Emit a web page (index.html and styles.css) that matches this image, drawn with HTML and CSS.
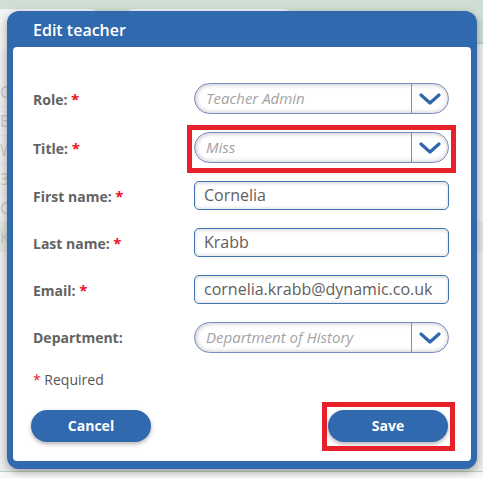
FILE: index.html
```html
<!DOCTYPE html>
<html>
<head>
<meta charset="utf-8">
<link rel="stylesheet" href="styles.css">
</head>
<body>
<div class="backdrop">
  <div class="topband">
    <div class="tab tab1"></div>
    <div class="tab tab2"></div>
  </div>
  <div class="bgpage">
    <div class="bgline"></div>
    <div class="bgrow">Gr</div>
    <div class="bgrow">Er</div>
    <div class="bgrow">W</div>
    <div class="bgrow">3H</div>
    <div class="bgrow">Cl</div>
    <div class="bgrow hl">Kr</div>
  </div>
  <div class="bgfoot"></div>
</div>

<div class="modal">
  <div class="modal-head">Edit teacher</div>
  <div class="modal-body">
    <div class="form">
      <div class="row">
        <div class="label">Role: <span class="req">*</span></div>
        <div class="select"><span class="sel-text">Teacher Admin</span><span class="sel-btn"><svg width="22" height="12" viewBox="0 0 22 12"><path d="M2 2 L11 10 L20 2" fill="none" stroke="#2f67ad" stroke-width="3.2" stroke-linecap="round" stroke-linejoin="round"/></svg></span></div>
      </div>
      <div class="row">
        <div class="label">Title: <span class="req">*</span></div>
        <div class="select"><span class="sel-text">Miss</span><span class="sel-btn"><svg width="22" height="12" viewBox="0 0 22 12"><path d="M2 2 L11 10 L20 2" fill="none" stroke="#2f67ad" stroke-width="3.2" stroke-linecap="round" stroke-linejoin="round"/></svg></span></div>
      </div>
      <div class="row">
        <div class="label">First name: <span class="req">*</span></div>
        <div class="input">Cornelia</div>
      </div>
      <div class="row">
        <div class="label">Last name: <span class="req">*</span></div>
        <div class="input">Krabb</div>
      </div>
      <div class="row">
        <div class="label">Email: <span class="req">*</span></div>
        <div class="input">cornelia.krabb@dynamic.co.uk</div>
      </div>
      <div class="row">
        <div class="label">Department:</div>
        <div class="select"><span class="sel-text">Department of History</span><span class="sel-btn"><svg width="22" height="12" viewBox="0 0 22 12"><path d="M2 2 L11 10 L20 2" fill="none" stroke="#2f67ad" stroke-width="3.2" stroke-linecap="round" stroke-linejoin="round"/></svg></span></div>
      </div>
    </div>
    <div class="required"><span class="req-n">*</span> Required</div>
    <div class="buttons">
      <div class="btn">Cancel</div>
      <div class="btn">Save</div>
    </div>
  </div>
</div>

<div class="mark mark-title"></div>
<div class="mark mark-save"></div>
</body>
</html>
```

FILE: styles.css
```css
html, body {
  margin: 0;
  padding: 0;
}
body {
  width: 483px;
  height: 478px;
  overflow: hidden;
  position: relative;
  background: #f1f3f2;
  font-family: "Open Sans", "Liberation Sans", sans-serif;
}
.backdrop {
  position: absolute;
  left: 0; top: 0; right: 0; bottom: 0;
  display: flex;
  flex-direction: column;
}
.topband {
  height: 42px;
  background: #cfdfd3;
  position: relative;
  flex: none;
}
.tab {
  position: absolute;
  top: 9px;
  height: 40px;
  background: #f2f4f3;
  border-radius: 10px;
}
.tab1 { left: -10px; width: 110px; }
.tab2 { left: 124px; width: 170px; }
.bgpage {
  flex: 1;
  background: #eceeed;
  border-top: 2px solid #bdd0c2;
  color: #c6cac8;
  font-size: 16px;
  padding-top: 12px;
}
.bgline { height: 22px; }
.bgrow {
  height: 28px;
  line-height: 28px;
  border-bottom: 1px solid #e2e5e3;
}
.bgrow.hl { background: #dfe7e1; }
.bgfoot {
  height: 6px;
  background: #f7f8f7;
  border-top: 1px solid #bcd1c1;
}

.modal {
  position: absolute;
  left: 7px;
  top: 11px;
  width: 470px;
  height: 458px;
  background: #3169ae;
  border-radius: 12px;
  box-shadow: 0 3px 8px rgba(0,0,0,0.35);
  display: flex;
  flex-direction: column;
  box-sizing: border-box;
  padding: 0 6px 8px 6px;
}
.modal-head {
  height: 36px;
  color: #fff;
  font-weight: 600;
  font-size: 16px;
  line-height: 38px;
  padding-left: 20px;
  flex: none;
}
.modal-body {
  flex: 1;
  background: #fff;
  border-radius: 4px;
  padding: 36px 22px 0 20px;
  display: flex;
  flex-direction: column;
}
.form {
  display: flex;
  flex-direction: column;
  gap: 18px;
}
.row {
  display: flex;
  align-items: center;
}
.label {
  width: 161px;
  flex: none;
  font-weight: 700;
  font-size: 14px;
  color: #636363;
}
.req {
  color: #e8141e;
  font-size: 15px;
}
.select {
  width: 255px;
  height: 31px;
  box-sizing: border-box;
  border: 1px solid #7a8cc2;
  border-radius: 16px;
  display: flex;
  background: #fff;
  box-shadow: inset 0 2px 4px rgba(0,0,0,0.12), inset 0 -2px 4px rgba(0,0,0,0.10), inset 3px 0 4px rgba(0,0,0,0.06);
  overflow: hidden;
}
.sel-text {
  flex: 1;
  font-style: italic;
  font-size: 15px;
  color: #a3a3a3;
  line-height: 29px;
  padding-left: 11px;
}
.sel-btn {
  width: 35px;
  flex: none;
  border-left: 1px solid #7a8cc2;
  display: flex;
  align-items: center;
  justify-content: center;
  padding-right: 1px;
  padding-top: 1px;
}
.input {
  width: 255px;
  height: 29px;
  box-sizing: border-box;
  border: 1px solid #4174b6;
  border-radius: 5px;
  box-shadow: inset 0 2px 3px rgba(0,0,0,0.12), inset 0 -2px 3px rgba(0,0,0,0.08);
  font-size: 16px;
  color: #606060;
  line-height: 27px;
  padding-left: 9px;
}
.required {
  margin-top: 17px;
  font-size: 14px;
  color: #555;
  line-height: 20px;
}
.req-n { color: #e8141e; }
.buttons {
  margin-top: 20px;
  display: flex;
  justify-content: space-between;
  margin-left: -2px;
  margin-right: 1px;
}
.btn {
  width: 120px;
  height: 32px;
  border-radius: 16px;
  background: #3169ae;
  color: #fff;
  font-weight: 700;
  font-size: 14px;
  line-height: 32px;
  text-align: center;
  box-shadow: 0 2px 4px rgba(0,0,0,0.3);
}
.mark {
  position: absolute;
  border: 5px solid #e8202a;
  box-sizing: border-box;
}
.mark-title {
  left: 187px;
  top: 125px;
  width: 269px;
  height: 48px;
}
.mark-save {
  left: 322px;
  top: 402px;
  width: 133px;
  height: 49px;
}
```
